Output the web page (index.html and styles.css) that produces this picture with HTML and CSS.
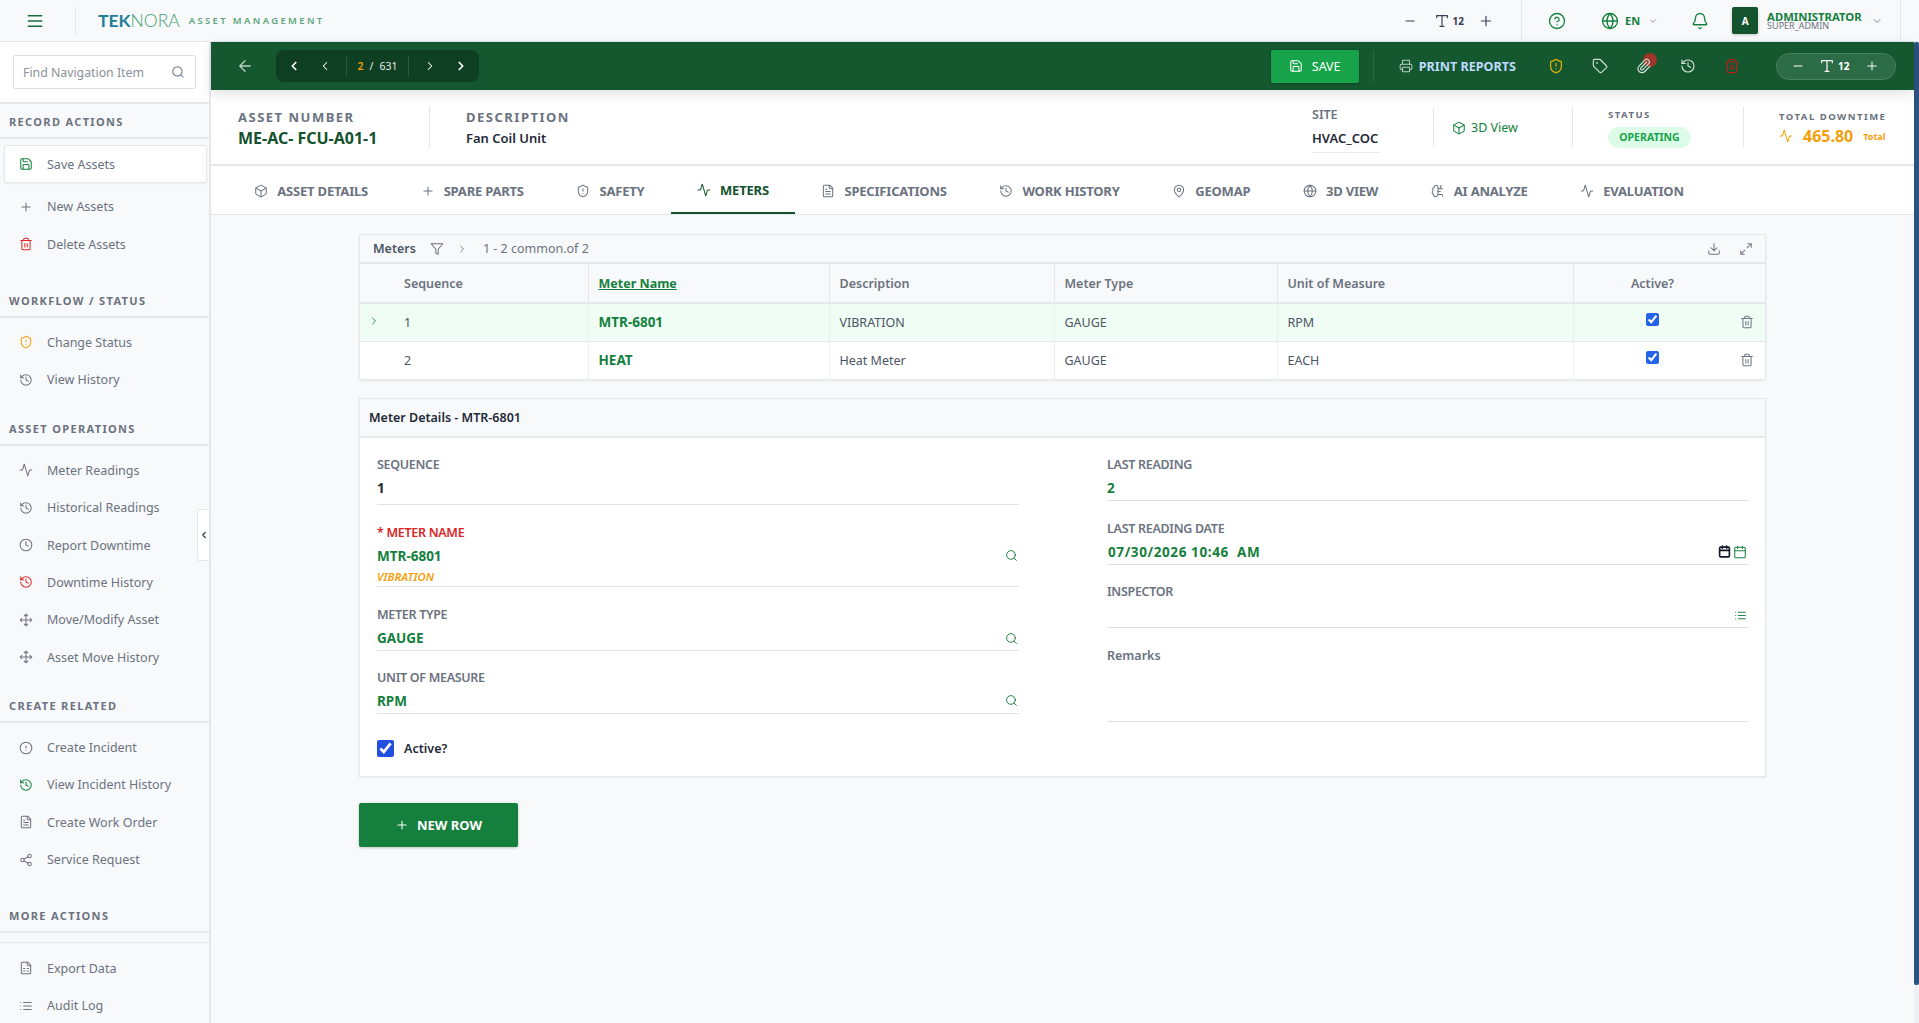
FILE: index.html
```html
<!DOCTYPE html>
<html lang="en">
<head>
    <meta charset="UTF-8">
    <meta name="viewport" content="width=device-width, initial-scale=1.0">
    <title>Teknora Asset Management</title>
    <link rel="stylesheet" href="styles.css">
</head>
<body>
    <!-- icon sprite -->
    <svg class="sprite" xmlns="http://www.w3.org/2000/svg">
        <symbol id="i-menu" viewBox="0 0 24 24"><path d="M3 5h18M3 12h18M3 19h18"/></symbol>
        <symbol id="i-search" viewBox="0 0 24 24"><circle cx="11" cy="11" r="8"/><path d="m21 21-4.3-4.3"/></symbol>
        <symbol id="i-save" viewBox="0 0 24 24"><path d="M15.2 3a2 2 0 0 1 1.4.6l3.8 3.8a2 2 0 0 1 .6 1.4V19a2 2 0 0 1-2 2H5a2 2 0 0 1-2-2V5a2 2 0 0 1 2-2z"/><path d="M17 21v-7a1 1 0 0 0-1-1H8a1 1 0 0 0-1 1v7"/><path d="M7 3v4a1 1 0 0 0 1 1h7"/></symbol>
        <symbol id="i-plus" viewBox="0 0 24 24"><path d="M5 12h14M12 5v14"/></symbol>
        <symbol id="i-minus" viewBox="0 0 24 24"><path d="M5 12h14"/></symbol>
        <symbol id="i-trash" viewBox="0 0 24 24"><path d="M3 6h18M19 6v14a2 2 0 0 1-2 2H7a2 2 0 0 1-2-2V6M8 6V4a2 2 0 0 1 2-2h4a2 2 0 0 1 2 2v2M10 11v6M14 11v6"/></symbol>
        <symbol id="i-shield" viewBox="0 0 24 24"><path d="M20 13c0 5-3.5 7.5-7.66 8.95a1 1 0 0 1-.67-.01C7.5 20.5 4 18 4 13V6a1 1 0 0 1 1-1c2 0 4.5-1.2 6.24-2.72a1.17 1.17 0 0 1 1.52 0C14.51 3.81 17 5 19 5a1 1 0 0 1 1 1z"/><path d="M12 8v4M12 16h.01"/></symbol>
        <symbol id="i-history" viewBox="0 0 24 24"><path d="M3 12a9 9 0 1 0 9-9 9.75 9.75 0 0 0-6.74 2.74L3 8"/><path d="M3 3v5h5M12 7v5l4 2"/></symbol>
        <symbol id="i-activity" viewBox="0 0 24 24"><path d="M22 12h-2.48a2 2 0 0 0-1.93 1.46l-2.35 8.36a.25.25 0 0 1-.48 0L9.24 2.18a.25.25 0 0 0-.48 0l-2.35 8.36A2 2 0 0 1 4.49 12H2"/></symbol>
        <symbol id="i-clock" viewBox="0 0 24 24"><circle cx="12" cy="12" r="10"/><path d="M12 6v6l4 2"/></symbol>
        <symbol id="i-move" viewBox="0 0 24 24"><path d="M12 2v20M15 19l-3 3-3-3M19 9l3 3-3 3M2 12h20M5 9l-3 3 3 3M9 5l3-3 3 3"/></symbol>
        <symbol id="i-alert" viewBox="0 0 24 24"><circle cx="12" cy="12" r="10"/><path d="M12 8v4M12 16h.01"/></symbol>
        <symbol id="i-file" viewBox="0 0 24 24"><path d="M15 2H6a2 2 0 0 0-2 2v16a2 2 0 0 0 2 2h12a2 2 0 0 0 2-2V7Z"/><path d="M14 2v4a2 2 0 0 0 2 2h4M10 9H8M16 13H8M16 17H8"/></symbol>
        <symbol id="i-sheet" viewBox="0 0 24 24"><path d="M15 2H6a2 2 0 0 0-2 2v16a2 2 0 0 0 2 2h12a2 2 0 0 0 2-2V7Z"/><path d="M14 2v4a2 2 0 0 0 2 2h4M8 13h2M14 13h2M8 17h2M14 17h2"/></symbol>
        <symbol id="i-share" viewBox="0 0 24 24"><circle cx="18" cy="5" r="3"/><circle cx="6" cy="12" r="3"/><circle cx="18" cy="19" r="3"/><path d="m8.59 13.51 6.83 3.98M15.41 6.51l-6.82 3.98"/></symbol>
        <symbol id="i-list" viewBox="0 0 24 24"><path d="M3 12h.01M3 18h.01M3 6h.01M8 12h13M8 18h13M8 6h13"/></symbol>
        <symbol id="i-box" viewBox="0 0 24 24"><path d="M21 8a2 2 0 0 0-1-1.73l-7-4a2 2 0 0 0-2 0l-7 4A2 2 0 0 0 3 8v8a2 2 0 0 0 1 1.73l7 4a2 2 0 0 0 2 0l7-4A2 2 0 0 0 21 16Z"/><path d="m3.3 7 8.7 5 8.7-5M12 22V12"/></symbol>
        <symbol id="i-pin" viewBox="0 0 24 24"><path d="M20 10c0 6-8 12-8 12s-8-6-8-12a8 8 0 0 1 16 0Z"/><circle cx="12" cy="10" r="3"/></symbol>
        <symbol id="i-globe" viewBox="0 0 24 24"><circle cx="12" cy="12" r="10"/><path d="M12 2a14.5 14.5 0 0 0 0 20 14.5 14.5 0 0 0 0-20M2 12h20"/></symbol>
        <symbol id="i-brain" viewBox="0 0 24 24"><path d="M12 5a3 3 0 1 0-6 .1 4 4 0 0 0-2.5 5.8 4 4 0 0 0 .5 6.6A4 4 0 1 0 12 18Z"/><path d="M12 13h4M12 18h6a2 2 0 0 1 2 2v1M12 8h8M16 8V5a2 2 0 0 1 2-2"/></symbol>
        <symbol id="i-filter" viewBox="0 0 24 24"><path d="M22 3H2l8 9.46V19l4 2v-8.54L22 3z"/></symbol>
        <symbol id="i-left" viewBox="0 0 24 24"><path d="m15 18-6-6 6-6"/></symbol>
        <symbol id="i-right" viewBox="0 0 24 24"><path d="m9 18 6-6-6-6"/></symbol>
        <symbol id="i-down" viewBox="0 0 24 24"><path d="m6 9 6 6 6-6"/></symbol>
        <symbol id="i-back" viewBox="0 0 24 24"><path d="M19 12H5M12 19l-7-7 7-7"/></symbol>
        <symbol id="i-download" viewBox="0 0 24 24"><path d="M21 15v4a2 2 0 0 1-2 2H5a2 2 0 0 1-2-2v-4M7 10l5 5 5-5M12 15V3"/></symbol>
        <symbol id="i-expand" viewBox="0 0 24 24"><path d="M15 3h6v6M9 21H3v-6M21 3l-7 7M3 21l7-7"/></symbol>
        <symbol id="i-printer" viewBox="0 0 24 24"><path d="M6 18H4a2 2 0 0 1-2-2v-5a2 2 0 0 1 2-2h16a2 2 0 0 1 2 2v5a2 2 0 0 1-2 2h-2"/><path d="M6 9V3a1 1 0 0 1 1-1h10a1 1 0 0 1 1 1v6"/><rect x="6" y="14" width="12" height="8" rx="1"/></symbol>
        <symbol id="i-tag" viewBox="0 0 24 24"><path d="M12.586 2.586A2 2 0 0 0 11.172 2H4a2 2 0 0 0-2 2v7.172a2 2 0 0 0 .586 1.414l8.704 8.704a2.426 2.426 0 0 0 3.42 0l6.58-6.58a2.426 2.426 0 0 0 0-3.42z"/><circle cx="7.5" cy="7.5" r=".5"/></symbol>
        <symbol id="i-clip" viewBox="0 0 24 24"><path d="M13.234 20.252 21 12.3"/><path d="m16 6-8.414 8.586a2 2 0 0 0 0 2.828 2 2 0 0 0 2.828 0l8.414-8.586a4 4 0 0 0 0-5.656 4 4 0 0 0-5.656 0l-8.415 8.585a6 6 0 1 0 8.486 8.486"/></symbol>
        <symbol id="i-help" viewBox="0 0 24 24"><circle cx="12" cy="12" r="10"/><path d="M9.09 9a3 3 0 0 1 5.83 1c0 2-3 3-3 3M12 17h.01"/></symbol>
        <symbol id="i-bell" viewBox="0 0 24 24"><path d="M10.268 21a2 2 0 0 0 3.464 0"/><path d="M3.262 15.326A1 1 0 0 0 4 17h16a1 1 0 0 0 .74-1.673C19.41 13.956 18 12.499 18 8A6 6 0 0 0 6 8c0 4.499-1.411 5.956-2.738 7.326"/></symbol>
        <symbol id="i-type" viewBox="0 0 24 24"><path d="M4 7V4h16v3M9 20h6M12 4v16"/></symbol>
        <symbol id="i-calendar" viewBox="0 0 24 24"><path d="M8 2v4M16 2v4M3 10h18"/><rect x="3" y="4" width="18" height="18" rx="2"/></symbol>
    </svg>

    <header class="topbar">
        <button class="top-menu"><svg class="ic ic-18"><use href="#i-menu"/></svg></button>
        <div class="brand">
            <span class="brand-logo"><b>TEK</b>NORA</span>
            <span class="brand-sub">ASSET MANAGEMENT</span>
        </div>
        <div class="top-right">
            <div class="font-size">
                <svg class="ic ic-14"><use href="#i-minus"/></svg>
                <svg class="ic ic-16 type-ic"><use href="#i-type"/></svg>
                <span class="font-size-num">12</span>
                <svg class="ic ic-16 ml-14"><use href="#i-plus"/></svg>
            </div>
            <div class="top-tools">
                <svg class="ic ic-18 top-green"><use href="#i-help"/></svg>
                <div class="lang">
                    <svg class="ic ic-18 top-green"><use href="#i-globe"/></svg>
                    <span>EN</span>
                    <svg class="ic ic-10"><use href="#i-down"/></svg>
                </div>
                <svg class="ic ic-18 top-green bell"><use href="#i-bell"/></svg>
                <div class="avatar">A</div>
                <div class="user">
                    <div class="user-name">ADMINISTRATOR</div>
                    <div class="user-role">SUPER_ADMIN</div>
                </div>
                <svg class="ic ic-12 user-caret"><use href="#i-down"/></svg>
            </div>
        </div>
    </header>

    <div class="layout">
        <aside class="sidebar">
            <div class="side-search">
                <div class="side-input">
                    <span>Find Navigation Item</span>
                    <svg class="ic ic-14"><use href="#i-search"/></svg>
                </div>
            </div>

            <h4 class="side-title">RECORD ACTIONS</h4>
            <ul class="side-list side-list-wide">
                <li class="side-item side-item-card"><svg class="ic ic-14 green"><use href="#i-save"/></svg>Save Assets</li>
                <li class="side-item"><svg class="ic ic-14"><use href="#i-plus"/></svg>New Assets</li>
                <li class="side-item"><svg class="ic ic-14 red"><use href="#i-trash"/></svg>Delete Assets</li>
            </ul>

            <h4 class="side-title">WORKFLOW / STATUS</h4>
            <ul class="side-list">
                <li class="side-item"><svg class="ic ic-14 amber"><use href="#i-shield"/></svg>Change Status</li>
                <li class="side-item"><svg class="ic ic-14"><use href="#i-history"/></svg>View History</li>
            </ul>

            <h4 class="side-title">ASSET OPERATIONS</h4>
            <ul class="side-list">
                <li class="side-item"><svg class="ic ic-14"><use href="#i-activity"/></svg>Meter Readings</li>
                <li class="side-item"><svg class="ic ic-14"><use href="#i-history"/></svg>Historical Readings</li>
                <li class="side-item"><svg class="ic ic-14"><use href="#i-clock"/></svg>Report Downtime</li>
                <li class="side-item"><svg class="ic ic-14 red"><use href="#i-history"/></svg>Downtime History</li>
                <li class="side-item"><svg class="ic ic-14"><use href="#i-move"/></svg>Move/Modify Asset</li>
                <li class="side-item"><svg class="ic ic-14"><use href="#i-move"/></svg>Asset Move History</li>
            </ul>

            <h4 class="side-title">CREATE RELATED</h4>
            <ul class="side-list side-list-wide">
                <li class="side-item"><svg class="ic ic-14"><use href="#i-alert"/></svg>Create Incident</li>
                <li class="side-item"><svg class="ic ic-14 green"><use href="#i-history"/></svg>View Incident History</li>
                <li class="side-item"><svg class="ic ic-14"><use href="#i-file"/></svg>Create Work Order</li>
                <li class="side-item"><svg class="ic ic-14"><use href="#i-share"/></svg>Service Request</li>
            </ul>

            <h4 class="side-title side-title-double">MORE ACTIONS</h4>
            <ul class="side-list">
                <li class="side-item"><svg class="ic ic-14"><use href="#i-sheet"/></svg>Export Data</li>
                <li class="side-item"><svg class="ic ic-14"><use href="#i-list"/></svg>Audit Log</li>
            </ul>

            <button class="side-collapse"><svg class="ic ic-10"><use href="#i-left"/></svg></button>
        </aside>

        <main class="main">
            <div class="toolbar">
                <svg class="ic ic-18 tool-back"><use href="#i-back"/></svg>
                <div class="pager">
                    <svg class="ic ic-14 pager-strong"><use href="#i-left"/></svg>
                    <svg class="ic ic-14 pager-btn"><use href="#i-left"/></svg>
                    <div class="pager-count"><span class="pager-cur">2</span><span class="pager-sep">/</span><span>631</span></div>
                    <svg class="ic ic-14 pager-btn"><use href="#i-right"/></svg>
                    <svg class="ic ic-14 pager-strong"><use href="#i-right"/></svg>
                </div>
                <div class="tool-right">
                    <button class="btn-save"><svg class="ic ic-14"><use href="#i-save"/></svg>SAVE</button>
                    <span class="tool-div"></span>
                    <div class="print"><svg class="ic ic-14"><use href="#i-printer"/></svg>PRINT REPORTS</div>
                    <svg class="ic ic-16 tool-ic shield"><use href="#i-shield"/></svg>
                    <svg class="ic ic-16 tool-ic"><use href="#i-tag"/></svg>
                    <div class="tool-ic clip"><span class="clip-badge"></span><svg class="ic ic-16 clip-ic"><use href="#i-clip"/></svg></div>
                    <svg class="ic ic-16 tool-ic"><use href="#i-history"/></svg>
                    <svg class="ic ic-16 tool-ic tool-trash"><use href="#i-trash"/></svg>
                    <div class="font-pill">
                        <svg class="ic ic-14"><use href="#i-minus"/></svg>
                        <svg class="ic ic-16 ml-14"><use href="#i-type"/></svg>
                        <span class="font-size-num">12</span>
                        <svg class="ic ic-14 pill-plus"><use href="#i-plus"/></svg>
                    </div>
                </div>
            </div>

            <section class="record">
                <div class="record-block record-asset">
                    <div class="record-label">ASSET NUMBER</div>
                    <div class="record-number">ME-AC- FCU-A01-1</div>
                </div>
                <div class="record-block record-desc">
                    <div class="record-label">DESCRIPTION</div>
                    <div class="record-text">Fan Coil Unit</div>
                </div>
                <div class="record-site">
                    <div class="site-label">SITE</div>
                    <div class="site-value">HVAC_COC</div>
                </div>
                <div class="record-3d"><svg class="ic ic-14"><use href="#i-box"/></svg>3D View</div>
                <div class="record-status">
                    <div class="small-label">STATUS</div>
                    <span class="badge">OPERATING</span>
                </div>
                <div class="record-down">
                    <div class="small-label">TOTAL DOWNTIME</div>
                    <div class="down-value">
                        <svg class="ic ic-14"><use href="#i-activity"/></svg>
                        <span class="down-num">465.80</span>
                        <span class="down-unit">Total</span>
                    </div>
                </div>
            </section>

            <nav class="tabs">
                <a class="tab"><svg class="ic ic-14"><use href="#i-box"/></svg>ASSET DETAILS</a>
                <a class="tab"><svg class="ic ic-14"><use href="#i-plus"/></svg>SPARE PARTS</a>
                <a class="tab"><svg class="ic ic-14"><use href="#i-shield"/></svg>SAFETY</a>
                <a class="tab tab-active"><svg class="ic ic-14"><use href="#i-activity"/></svg>METERS</a>
                <a class="tab"><svg class="ic ic-14"><use href="#i-file"/></svg>SPECIFICATIONS</a>
                <a class="tab"><svg class="ic ic-14"><use href="#i-history"/></svg>WORK HISTORY</a>
                <a class="tab"><svg class="ic ic-14"><use href="#i-pin"/></svg>GEOMAP</a>
                <a class="tab"><svg class="ic ic-14"><use href="#i-globe"/></svg>3D VIEW</a>
                <a class="tab"><svg class="ic ic-14"><use href="#i-brain"/></svg>AI ANALYZE</a>
                <a class="tab"><svg class="ic ic-14"><use href="#i-activity"/></svg>EVALUATION</a>
            </nav>

            <div class="content">
                <div class="grid-card">
                    <div class="grid-bar">
                        <span class="grid-name">Meters</span>
                        <svg class="ic ic-14 grid-filter"><use href="#i-filter"/></svg>
                        <svg class="ic ic-12 grid-chev"><use href="#i-right"/></svg>
                        <span class="grid-count">1 - 2 common.of 2</span>
                        <div class="grid-actions">
                            <svg class="ic ic-14"><use href="#i-download"/></svg>
                            <svg class="ic ic-14"><use href="#i-expand"/></svg>
                        </div>
                    </div>
                    <table class="grid">
                        <colgroup>
                            <col class="col-seq"><col class="col-name"><col class="col-desc"><col class="col-type"><col class="col-unit"><col class="col-active"><col class="col-del">
                        </colgroup>
                        <thead>
                            <tr>
                                <th class="cell-seq">Sequence</th>
                                <th class="th-sort">Meter Name</th>
                                <th>Description</th>
                                <th>Meter Type</th>
                                <th>Unit of Measure</th>
                                <th class="cell-center" colspan="2"><span class="th-active">Active?</span></th>
                            </tr>
                        </thead>
                        <tbody>
                            <tr class="row-selected">
                                <td class="cell-seq"><svg class="ic ic-12 row-chev"><use href="#i-right"/></svg>1</td>
                                <td class="cell-name">MTR-6801</td>
                                <td>VIBRATION</td>
                                <td>GAUGE</td>
                                <td>RPM</td>
                                <td class="cell-center"><input type="checkbox" checked></td>
                                <td class="cell-del"><svg class="ic ic-14"><use href="#i-trash"/></svg></td>
                            </tr>
                            <tr>
                                <td class="cell-seq">2</td>
                                <td class="cell-name">HEAT</td>
                                <td>Heat Meter</td>
                                <td>GAUGE</td>
                                <td>EACH</td>
                                <td class="cell-center"><input type="checkbox" checked></td>
                                <td class="cell-del"><svg class="ic ic-14"><use href="#i-trash"/></svg></td>
                            </tr>
                        </tbody>
                    </table>
                </div>

                <div class="detail-card">
                    <div class="detail-head">Meter Details - MTR-6801</div>
                    <div class="detail-body">
                        <div class="detail-col">
                            <div class="field">
                                <div class="field-label">SEQUENCE</div>
                                <div class="field-value value-dark value-tall">1</div>
                            </div>
                            <div class="field field-loose">
                                <div class="field-label label-req">* METER NAME</div>
                                <div class="field-value value-green value-open">MTR-6801<svg class="ic ic-13"><use href="#i-search"/></svg></div>
                                <div class="field-hint">VIBRATION</div>
                            </div>
                            <div class="field field-tight">
                                <div class="field-label">METER TYPE</div>
                                <div class="field-value value-green">GAUGE<svg class="ic ic-13"><use href="#i-search"/></svg></div>
                            </div>
                            <div class="field">
                                <div class="field-label">UNIT OF MEASURE</div>
                                <div class="field-value value-green">RPM<svg class="ic ic-13"><use href="#i-search"/></svg></div>
                            </div>
                            <label class="field-check"><input type="checkbox" checked>Active?</label>
                        </div>
                        <div class="detail-col">
                            <div class="field">
                                <div class="field-label">LAST READING</div>
                                <div class="field-value value-green">2</div>
                            </div>
                            <div class="field">
                                <div class="field-label">LAST READING DATE</div>
                                <div class="field-value value-green value-date">
                                    <span class="date-text">07/30/2026 10:46  AM</span>
                                    <span class="date-icons">
                                        <svg class="ic ic-13 date-native"><use href="#i-calendar"/></svg>
                                        <svg class="ic ic-14"><use href="#i-calendar"/></svg>
                                    </span>
                                </div>
                            </div>
                            <div class="field">
                                <div class="field-label">INSPECTOR</div>
                                <div class="field-value value-green value-end"><svg class="ic ic-13"><use href="#i-list"/></svg></div>
                            </div>
                            <div class="field">
                                <div class="field-label label-normal">Remarks</div>
                                <div class="field-value value-area"></div>
                            </div>
                        </div>
                    </div>
                </div>

                <button class="btn-new"><svg class="ic ic-14"><use href="#i-plus"/></svg>NEW ROW</button>
            </div>
        </main>

        <div class="scroll-track"><div class="scroll-thumb"></div></div>
    </div>
</body>
</html>
```

FILE: styles.css
```css
* {
    box-sizing: border-box;
}

html, body {
    height: 100%;
}

body {
    margin: 0;
    overflow: hidden;
    font-family: "Noto Sans", "Open Sans", sans-serif;
    font-size: 12px;
    color: #1f2937;
    background: #f8f9fa;
}

ul, h4 {
    margin: 0;
    padding: 0;
    list-style: none;
}

button {
    font-family: inherit;
    border: none;
    background: none;
    padding: 0;
}

.sprite {
    display: none;
}

.ic {
    flex: none;
    fill: none;
    stroke: currentColor;
    stroke-width: 1.75;
    stroke-linecap: round;
    stroke-linejoin: round;
}

.ic-10 { width: 10px; height: 10px; }
.ic-12 { width: 12px; height: 12px; }
.ic-13 { width: 13px; height: 13px; }
.ic-14 { width: 14px; height: 14px; }
.ic-16 { width: 16px; height: 16px; }
.ic-18 { width: 18px; height: 18px; }

.ml-14 { margin-left: 14px; }
.green { color: #15803d; }
.red { color: #dc2626; }
.amber { color: #f59e0b; }

/* top bar */
.topbar {
    height: 42px;
    display: flex;
    align-items: center;
    background: #f8f9fa;
    border-bottom: 1px solid #e2e5e9;
}

.top-menu {
    width: 76px;
    height: 28px;
    padding-left: 26px;
    display: flex;
    align-items: center;
    color: #1a6b3c;
    border-right: 1px solid #e5e7eb;
}

.brand {
    margin-left: 22px;
    display: flex;
    align-items: center;
}

.brand-logo {
    font-family: "Lato", sans-serif;
    font-size: 17.5px;
    font-weight: 300;
    color: #3f9f6f;
}

.brand-logo b {
    font-weight: 700;
    color: #1f7f9a;
}

.brand-sub {
    margin-left: 9px;
    font-size: 9.5px;
    font-weight: 600;
    letter-spacing: 2.35px;
    color: #5ba67c;
}

.top-right {
    margin-left: auto;
    display: flex;
    align-items: center;
    height: 100%;
}

.font-size {
    display: flex;
    align-items: center;
    padding-right: 27px;
    color: #374151;
}

.type-ic {
    margin-left: 17px;
}

.font-size-num {
    margin-left: 3px;
    font-size: 10px;
    font-weight: 700;
}

.top-tools {
    height: 100%;
    width: 380px;
    display: flex;
    align-items: center;
    padding-left: 26px;
    border-left: 1px solid #e5e7eb;
    border-right: 1px solid #e5e7eb;
    margin-right: 18px;
}

.top-green {
    color: #15803d;
}

.lang {
    margin-left: 35px;
    display: flex;
    align-items: center;
    gap: 6px;
    font-size: 11px;
    font-weight: 700;
    color: #15803d;
}

.lang .ic-10 {
    color: #6b7280;
    margin-left: 2px;
}

.bell {
    margin-left: 33px;
}

.avatar {
    margin-left: 23px;
    width: 26px;
    height: 27px;
    border-radius: 2px;
    display: flex;
    align-items: center;
    justify-content: center;
    font-size: 10px;
    font-weight: 700;
    color: #fff;
    background: #14532d;
    box-shadow: 0 1px 3px rgba(0, 0, 0, .2);
}

.user {
    margin-left: 9px;
    line-height: 9px;
}

.user-name {
    font-size: 11.3px;
    font-weight: 700;
    color: #15803d;
}

.user-role {
    font-size: 9px;
    color: #6b7280;
}

.user-caret {
    margin-left: 9px;
    color: #6b7280;
}

/* layout */
.layout {
    display: flex;
    height: 981px;
}

.sidebar {
    position: relative;
    width: 211px;
    flex: none;
    background: #f8f9fa;
    border-right: 2px solid #e5e7eb;
}

.side-search {
    height: 62px;
    padding: 13px 13px 0;
    background: #fff;
    border-bottom: 2px solid #e5e7eb;
}

.side-input {
    height: 34px;
    padding: 0 10px 0 9px;
    display: flex;
    align-items: center;
    justify-content: space-between;
    border: 1px solid #dde1e6;
    border-radius: 2px;
    color: #8a919c;
    font-size: 12.3px;
}

.side-input .ic {
    color: #6b7280;
}

.side-title {
    height: 35px;
    padding: 10px 9px 0;
    font-size: 11px;
    line-height: 16px;
    font-weight: 700;
    letter-spacing: 1.35px;
    color: #6b7280;
    border-bottom: 2px solid #e5e7eb;
}

.side-title-double {
    position: relative;
    margin-bottom: 10px;
}

.side-title-double::after {
    content: "";
    position: absolute;
    left: 0;
    right: 0;
    bottom: -12px;
    border-bottom: 1px solid #e5e7eb;
}

.side-list {
    padding: 6px 0 12px;
}

.side-list-wide {
    padding-bottom: 20px;
}

.side-item {
    height: 37.4px;
    padding-left: 19px;
    display: flex;
    align-items: center;
    gap: 14px;
    font-size: 12.5px;
    color: #6b7280;
}

.side-item-card {
    height: 38px;
    margin: 0 2px 5px 4px;
    padding-left: 14px;
    background: #fff;
    border: 1px solid #e5e7eb;
    border-radius: 2px;
    box-shadow: 0 1px 2px rgba(0, 0, 0, .06);
}

.side-collapse {
    position: absolute;
    top: 467px;
    right: 0;
    width: 12px;
    height: 52px;
    display: flex;
    align-items: center;
    justify-content: center;
    background: #fff;
    border: 1px solid #e5e7eb;
    border-right: none;
    border-radius: 2px 0 0 2px;
    color: #374151;
}

.side-collapse .ic {
    stroke-width: 3;
}

.main {
    flex: 1;
    min-width: 0;
    display: flex;
    flex-direction: column;
}

.scroll-track {
    width: 5px;
    flex: none;
    background: #eef0f3;
}

.scroll-thumb {
    height: 943px;
    background: #2c5282;
    border-radius: 2px;
}

/* green toolbar */
.toolbar {
    position: relative;
    height: 48px;
    flex: none;
    display: flex;
    align-items: center;
    padding-left: 25px;
    background: #15572f;
    color: #fff;
    box-shadow: 0 4px 12px rgba(0, 0, 0, .12);
}

.tool-back {
    color: #b7cfc0;
}

.pager {
    margin-left: 22px;
    width: 203px;
    height: 32px;
    display: flex;
    align-items: center;
    padding-left: 11px;
    background: #0f3f22;
    border-radius: 8px;
}

.pager-strong {
    stroke-width: 3;
}

.pager .pager-btn {
    margin-left: 17px;
}

.pager .pager-strong:last-child {
    margin-left: 17px;
}

.pager-count {
    margin-left: 14px;
    width: 63px;
    height: 20px;
    display: flex;
    align-items: center;
    justify-content: center;
    border-left: 1px solid #2a5a3c;
    border-right: 1px solid #2a5a3c;
    font-size: 10.5px;
    color: #e5e7eb;
}

.pager-cur {
    color: #f59e0b;
    font-weight: 600;
}

.pager-sep {
    margin: 0 6px;
}

.pager .pager-count + .pager-btn {
    margin-left: 14px;
}

.tool-right {
    margin-left: auto;
    padding-right: 18px;
    display: flex;
    align-items: center;
}

.btn-save {
    width: 88px;
    height: 33px;
    display: flex;
    align-items: center;
    justify-content: center;
    gap: 9px;
    font-size: 12.5px;
    color: #fff;
    background: #16a34a;
    border-radius: 2px;
    box-shadow: 0 1px 3px rgba(0, 0, 0, .25);
}

.tool-div {
    width: 1px;
    height: 32px;
    margin-left: 14px;
    background: #2a6a44;
}

.print {
    margin-left: 25px;
    display: flex;
    align-items: center;
    gap: 6px;
    font-size: 12.6px;
    font-weight: 700;
    color: #bfdbfe;
}

.print .ic {
    color: #b7cfc0;
}

.tool-ic {
    margin-left: 28px;
    color: #cfe0d6;
}

.shield {
    margin-left: 32px;
    color: #eab308;
}

.clip {
    position: relative;
    height: 16px;
}

.clip-ic {
    position: relative;
    display: block;
}

.clip-badge {
    position: absolute;
    top: -5px;
    right: -5px;
    width: 14px;
    height: 14px;
    border-radius: 50%;
    background: rgba(220, 38, 38, .7);
}

.tool-trash {
    color: #b91c1c;
}

.font-pill {
    margin-left: 36px;
    width: 120px;
    height: 27px;
    display: flex;
    align-items: center;
    padding-left: 14px;
    border: 1px solid #4d8064;
    border-radius: 14px;
    background: #2b6b46;
}

.pill-plus {
    margin-left: 16px;
}

/* record header */
.record {
    height: 76px;
    flex: none;
    display: flex;
    align-items: center;
    padding-left: 27px;
    background: #fff;
    border-bottom: 2px solid #e5e7eb;
}

.record-block {
    height: 42px;
    padding-top: 1px;
    line-height: 21px;
}

.record-asset {
    width: 192px;
    border-right: 1px solid #e5e7eb;
}

.record-desc {
    margin-left: 36px;
}

.record-label {
    font-size: 13px;
    font-weight: 700;
    letter-spacing: 1.5px;
    color: #6b7280;
}

.record-number {
    font-size: 16px;
    font-weight: 700;
    color: #14532d;
}

.record-text {
    font-size: 13px;
    font-weight: 600;
    color: #1f2937;
}

.record-site {
    margin-left: auto;
    width: 67px;
    padding-top: 10px;
    height: 62px;
}

.site-label {
    font-size: 12.5px;
    line-height: 18px;
    font-weight: 600;
    color: #6b7280;
}

.site-value {
    margin-top: 5px;
    padding-bottom: 5px;
    font-size: 13px;
    line-height: 18px;
    font-weight: 600;
    color: #1f2937;
    border-bottom: 1px solid #e5e7eb;
    white-space: nowrap;
}

.record-3d {
    width: 140px;
    height: 40px;
    padding: 1px 0 0 18px;
    margin-left: 54px;
    display: flex;
    align-items: center;
    gap: 5px;
    font-size: 12.5px;
    color: #15803d;
    border-left: 1px solid #e5e7eb;
    border-right: 1px solid #e5e7eb;
}

.record-status {
    width: 171px;
    height: 40px;
    padding: 1px 0 0 35px;
    border-right: 1px solid #e5e7eb;
}

.small-label {
    font-size: 9.5px;
    line-height: 14px;
    font-weight: 700;
    letter-spacing: 1.5px;
    color: #6b7280;
}

.badge {
    display: inline-block;
    margin-top: 5px;
    width: 83px;
    height: 21px;
    line-height: 21px;
    text-align: center;
    border-radius: 11px;
    font-size: 10.5px;
    font-weight: 700;
    color: #16a34a;
    background: #dcfce7;
}

.record-down {
    width: 170px;
    padding: 4px 0 0 35px;
}

.down-value {
    display: flex;
    align-items: center;
    color: #f59e0b;
    height: 24px;
}

.down-num {
    margin-left: 10px;
    font-size: 16px;
    font-weight: 700;
}

.down-unit {
    margin-left: 10px;
    font-size: 9px;
    font-weight: 700;
}

/* tabs */
.tabs {
    height: 49px;
    flex: none;
    display: flex;
    padding-left: 17px;
    background: #fff;
    border-bottom: 1px solid #e5e7eb;
}

.tab {
    height: 48px;
    padding: 2px 26.3px 0;
    display: flex;
    align-items: center;
    gap: 9px;
    font-size: 13px;
    font-weight: 700;
    letter-spacing: -.2px;
    color: #6b7280;
}

.tab-active {
    color: #14532d;
    border-bottom: 2px solid #14532d;
    padding-top: 1px;
}

/* content */
.content {
    padding: 19px 148px 0;
}

.grid-card {
    background: #fff;
    border-radius: 2px;
    border: 1px solid #e5e7eb;
    box-shadow: 0 1px 3px rgba(0, 0, 0, .08);
}

.grid-bar {
    height: 29px;
    display: flex;
    align-items: center;
    padding: 0 12px 0 13px;
    background: #f8f9fa;
    border-bottom: 2px solid #e5e7eb;
    color: #6b7280;
}

.grid-name {
    font-size: 12.5px;
    font-weight: 600;
    color: #4b5563;
}

.grid-filter {
    margin-left: 14px;
}

.grid-chev {
    margin-left: 12px;
}

.grid-count {
    margin-left: 15px;
    font-size: 12.5px;
}

.grid-actions {
    margin-left: auto;
    display: flex;
    gap: 18px;
}

.grid {
    width: 100%;
    border-collapse: collapse;
    table-layout: fixed;
    font-size: 12.5px;
}

.col-seq { width: 228px; }
.col-name { width: 241px; }
.col-desc { width: 225px; }
.col-type { width: 223px; }
.col-unit { width: 296px; }
.col-active { width: 158px; }
.col-del { width: 34px; }

.grid th {
    height: 39px;
    padding: 0 10px;
    text-align: left;
    font-weight: 600;
    color: #6b7280;
    background: #f8f9fa;
    border-bottom: 2px solid #e5e7eb;
    border-right: 1px solid #e5e7eb;
}

.grid th:last-child {
    border-right: none;
}

.grid td {
    height: 38px;
    padding: 0 10px;
    color: #4b5563;
    border-right: 1px solid #eceef1;
}

.grid td:nth-child(n+6) {
    border-right: none;
}

.grid .cell-seq {
    position: relative;
    padding-left: 44px;
}

.grid .th-sort {
    color: #15803d;
    font-weight: 700;
    text-decoration: underline;
}

.grid .cell-center {
    text-align: center;
    padding: 0;
}

.th-active {
    display: block;
    width: 158px;
    text-align: center;
}

.grid input {
    width: 13px;
    height: 13px;
    margin: 0 0 6px;
    accent-color: #2563eb;
    vertical-align: middle;
}

.grid .cell-del {
    padding: 0 2px 0 0;
    text-align: center;
    color: #6b7280;
}

.cell-del .ic {
    vertical-align: middle;
    margin-bottom: 2px;
}

.row-selected td {
    background: #f0fdf4;
    border-bottom: 1px solid #e5e7eb;
}

.row-chev {
    position: absolute;
    left: 8px;
    top: 11px;
    color: #15803d;
}

.grid .cell-name {
    font-size: 13.5px;
    font-weight: 700;
    color: #15803d;
}

/* detail card */
.detail-card {
    margin-top: 18px;
    height: 379px;
    background: #fff;
    border: 1px solid #e5e7eb;
    box-shadow: 0 1px 2px rgba(0, 0, 0, .06);
}

.detail-head {
    height: 39px;
    padding-left: 9px;
    line-height: 38px;
    font-size: 12.5px;
    font-weight: 600;
    color: #1f2937;
    background: #f8f9fa;
    border-bottom: 2px solid #e5e7eb;
}

.detail-body {
    display: grid;
    grid-template-columns: 642px 641px;
    column-gap: 88px;
    padding: 18px 17px 0;
}

.field {
    margin-bottom: 18.5px;
}

.field-loose {
    margin-bottom: 19.5px;
}

.field-tight {
    margin-bottom: 17.5px;
}

.field-label {
    height: 18px;
    line-height: 18px;
    margin-bottom: 4px;
    font-size: 12.5px;
    font-weight: 600;
    letter-spacing: -.3px;
    color: #6b7280;
}

.label-req {
    color: #dc2626;
}

.label-normal {
    letter-spacing: 0;
}

.field-value {
    height: 23px;
    padding-bottom: 2px;
    display: flex;
    align-items: center;
    justify-content: space-between;
    font-size: 13.5px;
    font-weight: 700;
    border-bottom: 1px solid #dfe2e6;
}

.field-value .ic {
    margin-right: 1px;
}

.value-dark {
    color: #1f2937;
}

.value-tall {
    height: 27px;
    padding-bottom: 6px;
}

.value-green {
    color: #15803d;
}

.value-open {
    border-bottom: none;
    height: 20px;
    padding-bottom: 0;
}

.field-hint {
    height: 21px;
    padding-top: 3px;
    font-size: 11.3px;
    font-weight: 600;
    font-style: italic;
    color: #f59e0b;
    border-bottom: 1px solid #dfe2e6;
}

.value-date {
    letter-spacing: .6px;
}

.date-text {
    padding-left: 1px;
    white-space: pre;
}

.date-icons {
    display: flex;
    align-items: center;
    gap: 1px;
}

.date-native {
    color: #111827;
    stroke-width: 3;
}

.value-end {
    justify-content: flex-end;
}

.value-area {
    height: 53px;
}

.field-check {
    display: flex;
    align-items: center;
    gap: 10px;
    margin-top: 26px;
    font-size: 12.5px;
    font-weight: 600;
    color: #1f2937;
}

.field-check input {
    width: 17px;
    height: 17px;
    margin: 0;
    accent-color: #2050e0;
}

.btn-new {
    margin-top: 26px;
    width: 159px;
    height: 44px;
    display: flex;
    align-items: center;
    justify-content: center;
    gap: 8px;
    font-size: 13px;
    font-weight: 700;
    color: #fff;
    background: #15803d;
    border-radius: 2px;
    box-shadow: 0 1px 3px rgba(0, 0, 0, .2);
}
```
